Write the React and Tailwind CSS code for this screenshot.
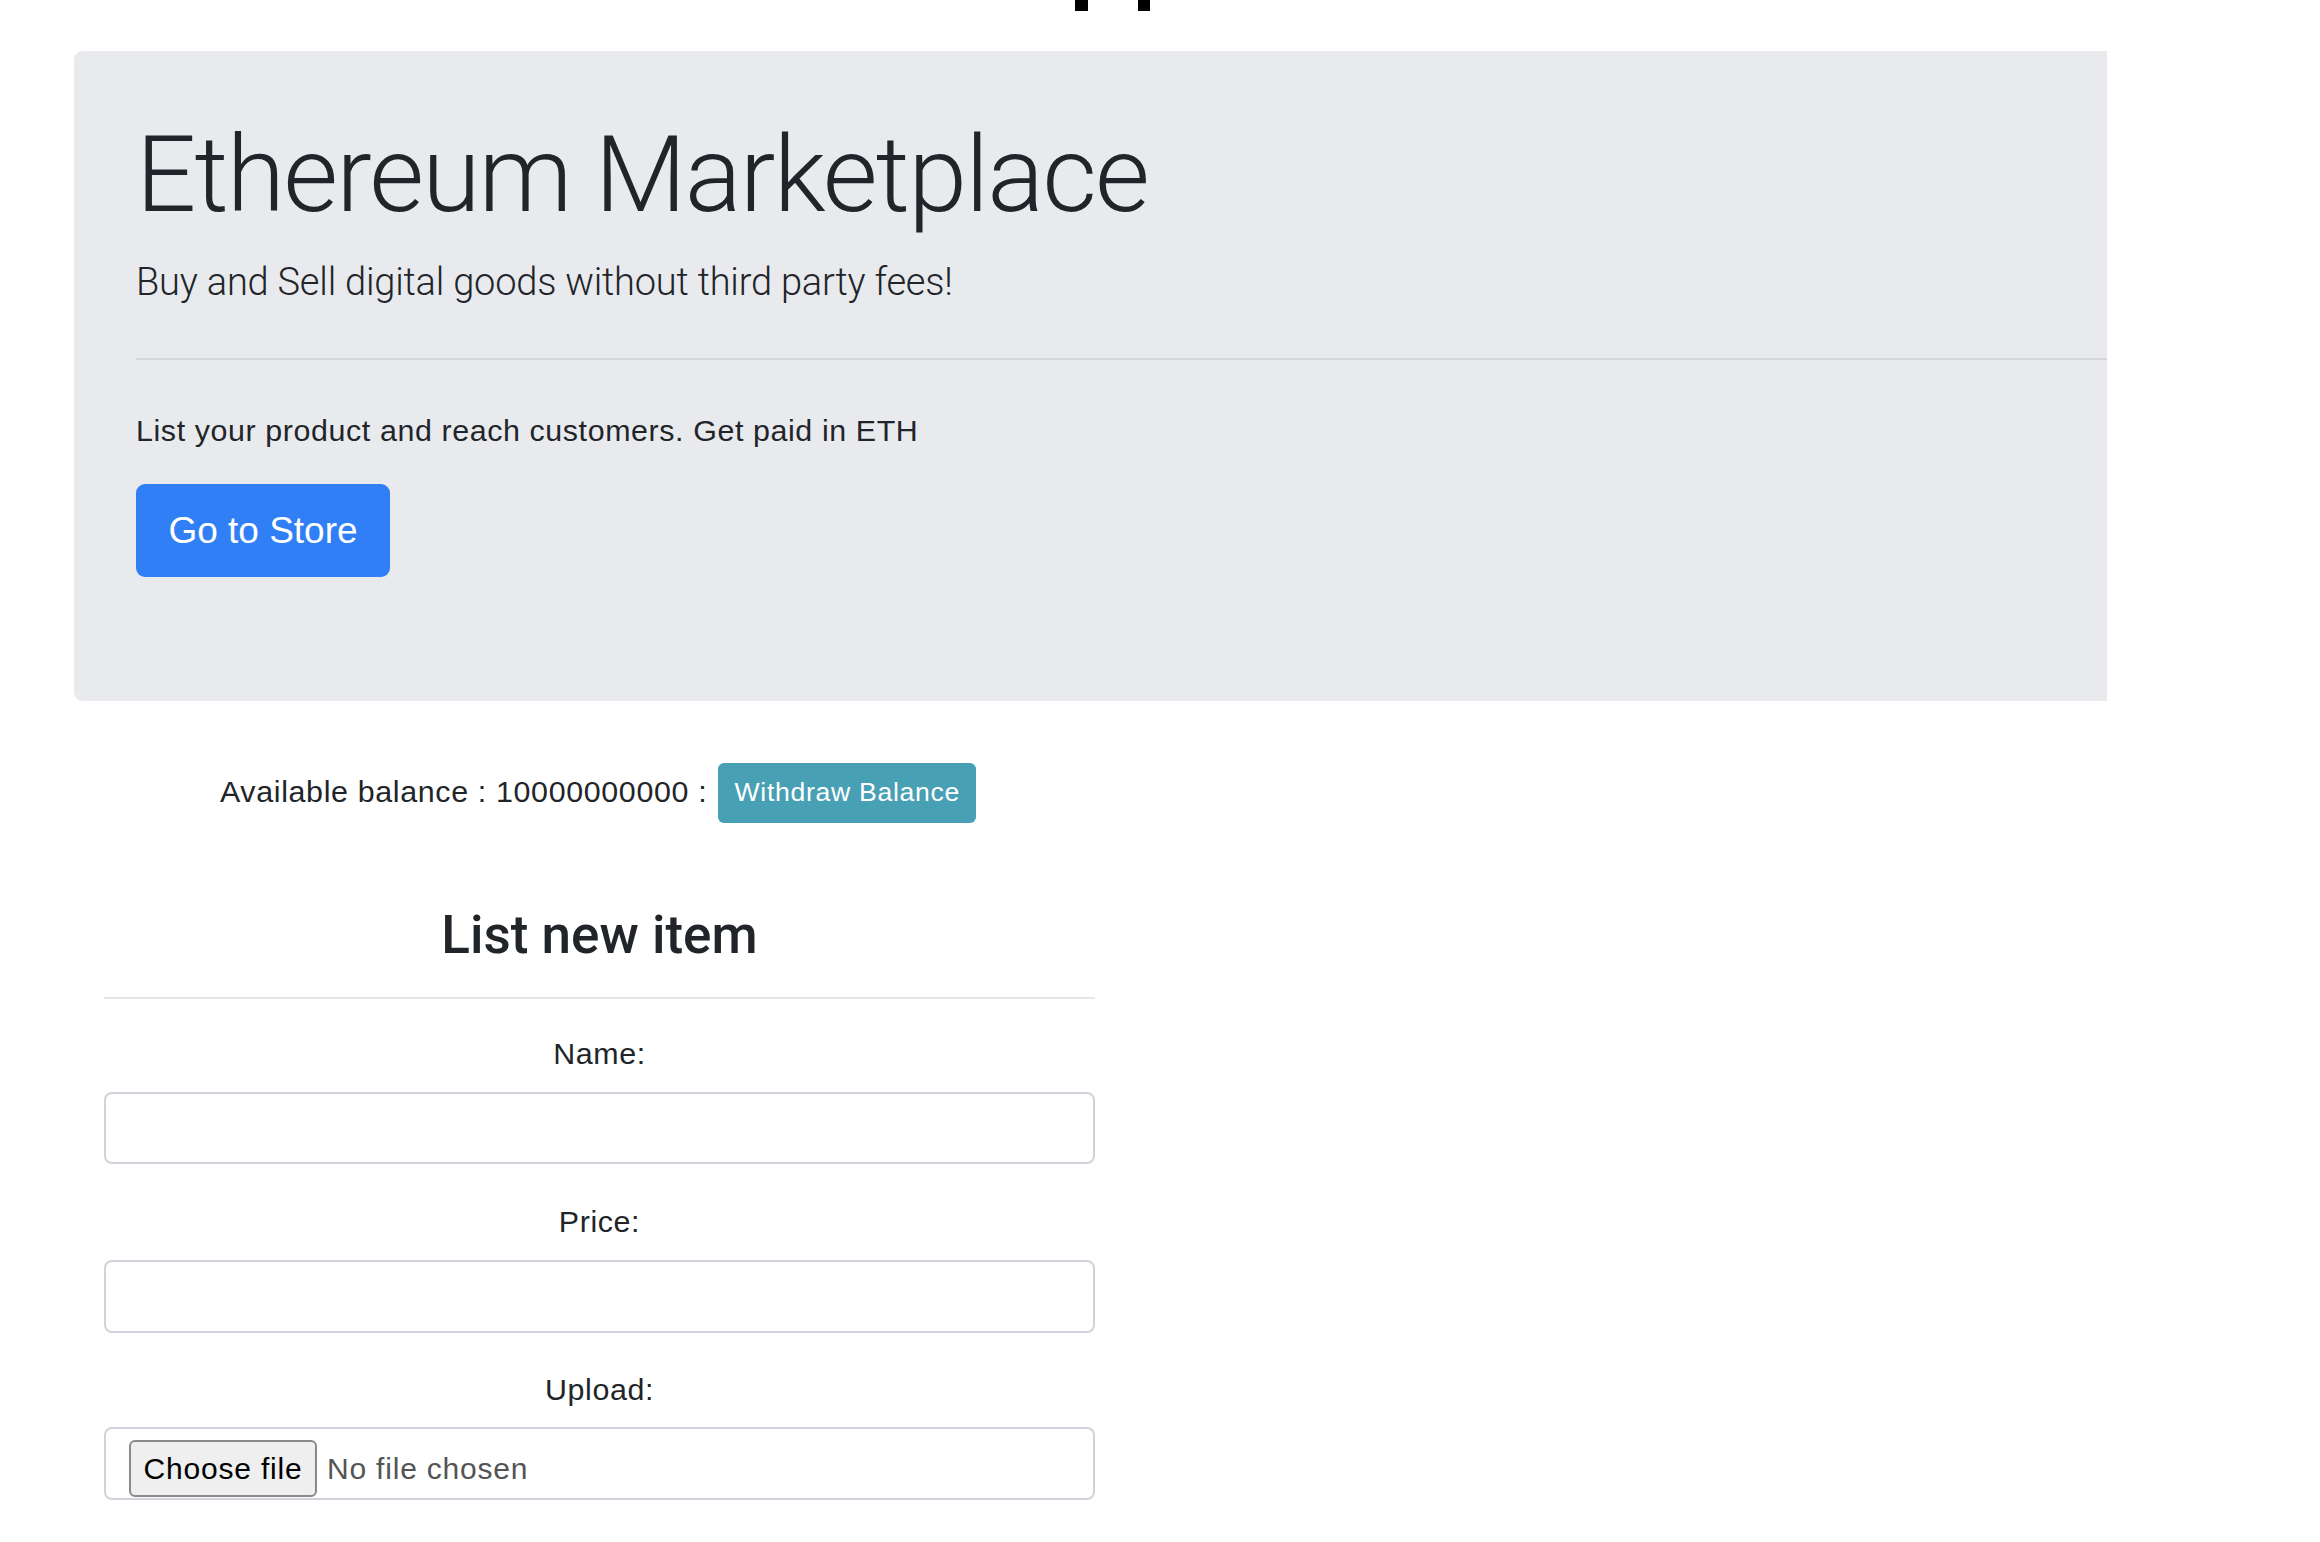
export default function App() {
  return (
    <div className="w-[2320px] h-[1542px] bg-white overflow-hidden font-['Liberation_Sans',Arial,sans-serif] text-[#212529]">
      <div className="h-[51px] flex items-start pl-[1075px] gap-[50px]">
        <div className="w-[13px] h-[11px] bg-black" />
        <div className="w-[12px] h-[11px] bg-black" />
      </div>

      <div className="ml-[74px] w-[2033px] h-[650px] bg-[#e9eaee] rounded-bl-[9px] rounded-tl-[9px] pl-[62px] pt-[61px]">
        <h1 className="font-['Roboto',sans-serif] font-light text-[106px] leading-[1.2] tracking-[-1.8px]">Ethereum Marketplace</h1>
        <p className="mt-[15px] font-['Roboto',sans-serif] font-light text-[38px] leading-[1.5] tracking-[-0.2px]">
          Buy and Sell digital goods without third party fees!
        </p>
        <div className="mt-[47px] h-[2px] bg-[#d5d6da]" />
        <p className="mt-[48px] text-[30.4px] leading-[1.5] tracking-[0.6px]">List your product and reach customers. Get paid in ETH</p>
        <div className="mt-[30px] w-[254px] h-[93px] rounded-[9px] bg-[#307ff6] text-white text-[37px] flex items-center justify-center">
          Go to Store
        </div>
      </div>

      <div className="mt-[62px] h-[60px] pl-[220px] flex items-center gap-[11px]">
        <span className="text-[30.4px] leading-[1.5] tracking-[0.65px] -mt-[2px]">Available balance : 10000000000 :</span>
        <div className="w-[258px] h-[60px] rounded-[6px] bg-[#48a0b5] text-white text-[26.6px] tracking-[0.7px] flex items-center justify-center">
          Withdraw Balance
        </div>
      </div>

      <div className="ml-[104px] w-[991px]">
        <h3 className="mt-[81px] text-center font-['Roboto',sans-serif] font-medium text-[53px] leading-[1.2]">List new item</h3>
        <div className="mt-[29px] h-[2px] bg-[#e6e6e6]" />

        <label className="block mt-[32px] text-center text-[30.4px] leading-[1.5] tracking-[0.6px]">Name:</label>
        <input type="text" className="block mt-[16px] w-full h-[72px] border-2 border-[#ced4da] rounded-[8px] bg-white outline-none" />

        <label className="block mt-[35px] text-center text-[30.4px] leading-[1.5] tracking-[0.6px]">Price:</label>
        <input type="text" className="block mt-[15px] w-full h-[73px] border-2 border-[#ced4da] rounded-[8px] bg-white outline-none" />

        <label className="block mt-[34px] text-center text-[30.4px] leading-[1.5] tracking-[0.6px]">Upload:</label>
        <div className="mt-[15px] w-full h-[73px] border-2 border-[#ced4da] rounded-[8px] bg-white pl-[23px] pt-[11px]">
          <div className="flex items-center gap-[10px]">
            <div className="w-[188px] h-[57px] bg-[#efefef] border-2 border-[#8a8a8a] rounded-[6px] text-black text-[30px] tracking-[0.8px] flex items-center justify-center">
              Choose file
            </div>
            <span className="text-[30px] tracking-[0.8px] text-[#545454]">No file chosen</span>
          </div>
        </div>
      </div>
    </div>
  );
}
